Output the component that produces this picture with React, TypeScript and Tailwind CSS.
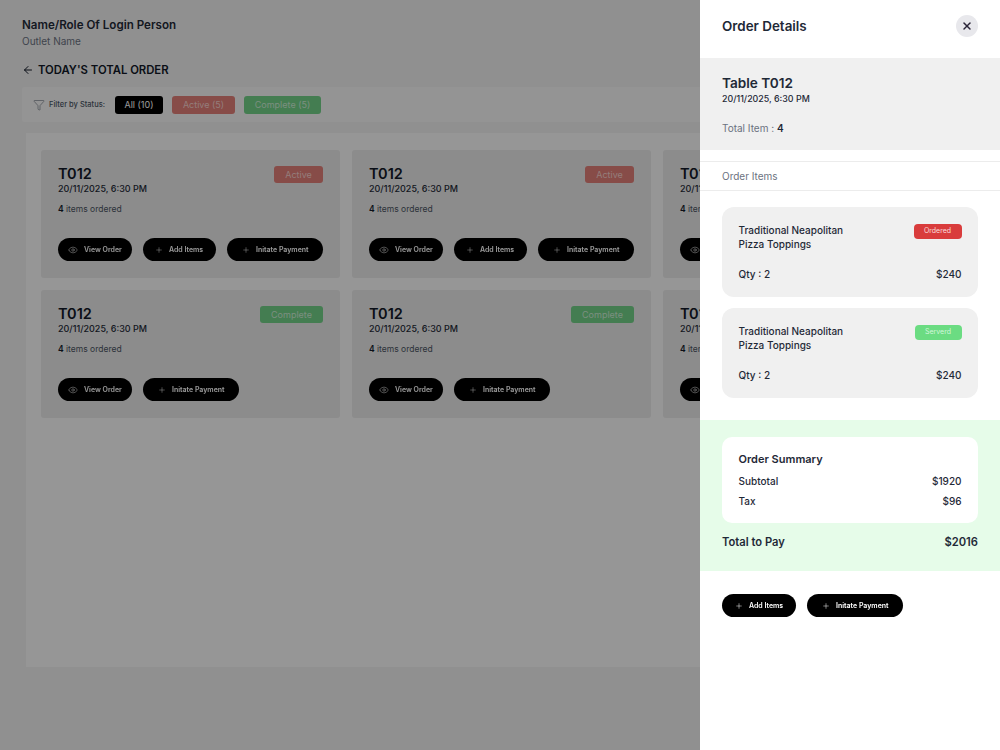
import { ArrowLeft, Eye, Filter, Plus, X } from "lucide-react";

function PillButton({ kind, label }: { kind: "eye" | "plus"; label: string }) {
  const width = label === "Initate Payment" ? "w-[96px]" : "w-[74px]";
  return (
    <button className={`flex h-[23px] ${width} items-center justify-center gap-[6px] rounded-full bg-black text-[7px] leading-[9px] font-semibold text-white`}>
      {kind === "eye" ? <Eye size={10} strokeWidth={1.25} /> : <Plus size={8} strokeWidth={1.5} />}
      <span className="[will-change:transform]">{label}</span>
    </button>
  );
}

function OrderCard({ complete }: { complete: boolean }) {
  return (
    <div className="flex h-[128px] w-[299px] shrink-0 flex-col rounded-[3px] bg-[#e9e9e9] px-[17px] pt-[16px]">
      <div className="flex items-start justify-between">
        <div>
          <div className="text-[14.5px] leading-[16px] font-semibold text-[#111827]">T012</div>
          <div className="text-[9px] leading-[14px] font-medium text-[#1f2937]">20/11/2025, 6:30 PM</div>
        </div>
        {complete ? (
          <span className="flex h-[17px] w-[63px] items-center justify-center rounded-[3px] bg-[#72d088] text-[9px] text-[#cdeed5]">Complete</span>
        ) : (
          <span className="flex h-[17px] w-[49px] items-center justify-center rounded-[3px] bg-[#e27f78] text-[9px] text-[#f6d0cd]">Active</span>
        )}
      </div>
      <div className="mt-[6px] text-[8.5px] leading-[14px] text-[#4b5563]">
        <span className="font-semibold text-[#111827]">4</span> items ordered
      </div>
      <div className="mt-[22px] flex gap-[11px]">
        <PillButton kind="eye" label="View Order" />
        {!complete && <PillButton kind="plus" label="Add Items" />}
        <PillButton kind="plus" label="Initate Payment" />
      </div>
    </div>
  );
}

function ItemCard({ served }: { served: boolean }) {
  return (
    <div className="flex h-[90px] flex-col rounded-[12px] bg-[#f0f0f0] px-[16.5px] pt-[17px]">
      <div className="flex items-start justify-between">
        <div className="text-[10px] leading-[13.5px] font-medium text-[#1f2937]">
          Traditional Neapolitan
          <br />
          Pizza Toppings
        </div>
        {served ? (
          <span className="flex h-[15px] w-[47px] items-center justify-center rounded-[4px] bg-[#6bdc82] text-[7px] text-[#d3f6db]">Serverd</span>
        ) : (
          <span className="flex h-[15px] w-[48px] items-center justify-center rounded-[4px] bg-[#d93c3c] text-[7px] text-[#fbdcdc]">Ordered</span>
        )}
      </div>
      <div className="mt-[16px] flex items-center justify-between text-[10px] leading-[14px] font-medium text-[#1f2937]">
        <span>Qty : 2</span>
        <span>$240</span>
      </div>
    </div>
  );
}

export default function App() {
  return (
    <div className="relative h-[750px] w-[1000px] overflow-hidden bg-[#f0f0f0] font-['Inter',sans-serif] antialiased">
      <div className="px-[22px] pt-[18px]">
        <div className="text-[11.6px] leading-[15px] font-semibold text-[#1f2937]">Name/Role Of Login Person</div>
        <div className="mt-[1px] text-[10px] leading-[15px] text-[#6b7280]">Outlet Name</div>
        <div className="mt-[13px] flex items-center gap-[4px]">
          <ArrowLeft size={12} strokeWidth={2} className="text-[#111827]" />
          <span className="text-[11.3px] leading-[16px] font-semibold text-[#111827]">TODAY'S TOTAL ORDER</span>
        </div>
        <div className="mt-[9px] flex h-[35px] w-[956px] items-center rounded-[2px] bg-[#f7f7f7] pl-[11px]">
          <Filter size={12} strokeWidth={1} className="text-[#4b5563]" />
          <span className="ml-[4px] text-[7.5px] font-medium text-[#4b5563]">Filter by Status:</span>
          <span className="ml-[10px] flex h-[18px] w-[48px] items-center justify-center rounded-[3px] bg-black text-[9px] text-white">All (10)</span>
          <span className="ml-[9px] flex h-[18px] w-[63px] items-center justify-center rounded-[3px] bg-[#e27f78] text-[9px] text-[#f6d0cd]">Active (5)</span>
          <span className="ml-[9px] flex h-[18px] w-[77px] items-center justify-center rounded-[3px] bg-[#72d088] text-[9px] text-[#cdeed5]">Complete (5)</span>
        </div>
        <div className="mt-[11px] ml-[4px] h-[534px] w-[952px] bg-[#fafafa] pt-[17px] pl-[15px]">
          <div className="grid grid-cols-[299px_299px_299px] gap-x-[12px] gap-y-[12px]">
            <OrderCard complete={false} />
            <OrderCard complete={false} />
            <OrderCard complete={false} />
            <OrderCard complete />
            <OrderCard complete />
            <OrderCard complete />
          </div>
        </div>
      </div>

      <div className="absolute inset-0 bg-black/40 backdrop-blur-[0.5px]" />

      <aside className="absolute top-0 right-0 h-[750px] w-[300px] bg-white">
        <div className="flex h-[58px] items-start justify-between px-[22px] pt-[15px]">
          <span className="text-[13.4px] leading-[22px] font-semibold text-[#1f2937]">Order Details</span>
          <button className="flex h-[22px] w-[22px] items-center justify-center rounded-full bg-[#e8e8ec] text-[#2a2438]">
            <X size={12} strokeWidth={3} />
          </button>
        </div>
        <div className="h-[92px] bg-[#f0f0f0] px-[22px] pt-[16px]">
          <div className="text-[13.6px] leading-[18px] font-semibold text-[#1f2937]">Table T012</div>
          <div className="mt-px text-[8.9px] leading-[12px] font-medium text-[#1f2937]">20/11/2025, 6:30 PM</div>
          <div className="mt-[16px] text-[10px] leading-[14px] text-[#6b7280]">
            Total Item : <span className="font-semibold text-[#1f2937]">4</span>
          </div>
        </div>
        <div className="mt-[11px] flex h-[30px] items-center border-y border-[#ececec] px-[22px] text-[10px] text-[#6b7280]">Order Items</div>
        <div className="flex flex-col gap-[11px] px-[22px] pt-[16px]">
          <ItemCard served={false} />
          <ItemCard served />
        </div>
        <div className="mt-[22px] h-[151px] bg-[#e6fce9] px-[22px] pt-[17px]">
          <div className="h-[86px] rounded-[10px] bg-white px-[16.5px] pt-[15px]">
            <div className="text-[11px] leading-[14px] font-semibold text-[#1f2937]">Order Summary</div>
            <div className="mt-[8px] flex justify-between text-[10px] leading-[14px] font-medium text-[#1f2937]">
              <span>Subtotal</span>
              <span>$1920</span>
            </div>
            <div className="mt-[6px] flex justify-between text-[10px] leading-[14px] font-medium text-[#1f2937]">
              <span>Tax</span>
              <span>$96</span>
            </div>
          </div>
          <div className="mt-[11px] flex items-start justify-between font-semibold text-[#1f2937]">
            <span className="text-[11.2px] leading-[16px]">Total to Pay</span>
            <span className="text-[11.2px] leading-[16px]">$2016</span>
          </div>
        </div>
        <div className="flex gap-[11px] px-[22px] pt-[23px]">
          <PillButton kind="plus" label="Add Items" />
          <PillButton kind="plus" label="Initate Payment" />
        </div>
      </aside>
    </div>
  );
}
